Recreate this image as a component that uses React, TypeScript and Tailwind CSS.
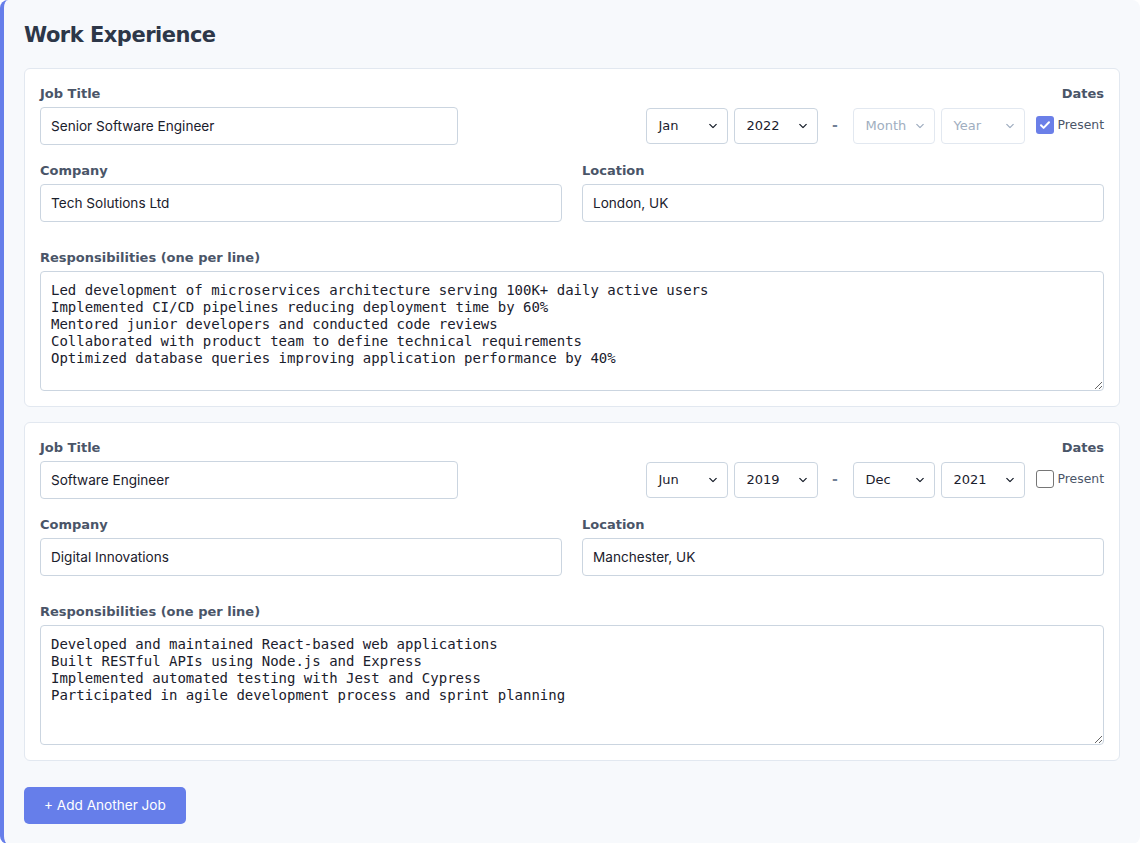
import * as React from "react";

interface Job {
  title: string;
  company: string;
  location: string;
  startMonth: string;
  startYear: string;
  endMonth: string;
  endYear: string;
  present: boolean;
  responsibilities: string[];
}

const jobs: Job[] = [
  {
    title: "Senior Software Engineer",
    company: "Tech Solutions Ltd",
    location: "London, UK",
    startMonth: "Jan",
    startYear: "2022",
    endMonth: "Month",
    endYear: "Year",
    present: true,
    responsibilities: [
      "Led development of microservices architecture serving 100K+ daily active users",
      "Implemented CI/CD pipelines reducing deployment time by 60%",
      "Mentored junior developers and conducted code reviews",
      "Collaborated with product team to define technical requirements",
      "Optimized database queries improving application performance by 40%",
    ],
  },
  {
    title: "Software Engineer",
    company: "Digital Innovations",
    location: "Manchester, UK",
    startMonth: "Jun",
    startYear: "2019",
    endMonth: "Dec",
    endYear: "2021",
    present: false,
    responsibilities: [
      "Developed and maintained React-based web applications",
      "Built RESTful APIs using Node.js and Express",
      "Implemented automated testing with Jest and Cypress",
      "Participated in agile development process and sprint planning",
    ],
  },
];

const labelClasses =
  "mb-[5px] block font-['DejaVu_Sans',sans-serif] text-[13px] font-bold leading-[17px] text-[#4a5568]";

const inputClasses =
  "h-[38px] w-full rounded-[4px] border border-[#cbd5e0] bg-white px-[10px] font-['Inter',sans-serif] text-[13.6px] text-[#1a202c] outline-none";

function Chevron({ muted }: { muted?: boolean }) {
  return (
    <svg
      viewBox="0 0 10 6"
      className="pointer-events-none absolute right-[10px] top-1/2 h-[5px] w-[8px] -translate-y-1/2"
      fill="none"
      stroke={muted ? "#a0aec0" : "#1a202c"}
      strokeWidth="1.6"
      strokeLinecap="round"
      strokeLinejoin="round"
      aria-hidden
    >
      <path d="M1 1l4 4 4-4" />
    </svg>
  );
}

function FakeSelect({
  value,
  width,
  disabled,
}: {
  value: string;
  width: string;
  disabled?: boolean;
}) {
  return (
    <div
      className={`relative flex h-[36px] items-center rounded-[4px] border bg-white pl-[12px] font-['DejaVu_Sans',sans-serif] text-[13px] ${width} ${
        disabled
          ? "border-[#e2e8f0] text-[#a0aec0]"
          : "border-[#cbd5e0] text-[#1a202c]"
      }`}
    >
      {value}
      <Chevron muted={disabled} />
    </div>
  );
}

function Checkbox({ checked }: { checked: boolean }) {
  if (checked) {
    return (
      <span className="flex h-[18px] w-[18px] items-center justify-center rounded-[3px] bg-[#6b7fe8]">
        <svg viewBox="0 0 12 12" className="h-[12px] w-[12px]" fill="none" aria-hidden>
          <path
            d="M2 6.3l2.6 2.6L10 3.2"
            stroke="white"
            strokeWidth="2"
            strokeLinecap="round"
            strokeLinejoin="round"
          />
        </svg>
      </span>
    );
  }
  return (
    <span className="block h-[18px] w-[18px] rounded-[3px] border border-[#767676] bg-white" />
  );
}

function JobCard({ job }: { job: Job }) {
  return (
    <div className="mb-[15px] rounded-md border border-[#e2e8f0] bg-white p-[15px] pt-[16px]">
      <div className="flex items-start justify-between">
        <div className="w-[418px]">
          <label className={labelClasses}>Job Title</label>
          <input className={inputClasses} defaultValue={job.title} readOnly />
        </div>
        <div className="flex flex-col items-end">
          <label className={labelClasses}>Dates</label>
          <div className="flex h-[37px] items-center">
            <div className="flex gap-[6px]">
              <FakeSelect value={job.startMonth} width="w-[82px]" />
              <FakeSelect value={job.startYear} width="w-[84px]" />
            </div>
            <span className="w-[35px] text-center font-['DejaVu_Sans',sans-serif] text-[14px] font-bold text-[#718096]">
              -
            </span>
            <div className="flex gap-[6px]">
              <FakeSelect value={job.endMonth} width="w-[82px]" disabled={job.present} />
              <FakeSelect value={job.endYear} width="w-[84px]" disabled={job.present} />
            </div>
            <label className="ml-[11px] flex items-center gap-[4px] font-['DejaVu_Sans',sans-serif] text-[12.4px] text-[#4a5568]">
              <Checkbox checked={job.present} />
              Present
            </label>
          </div>
        </div>
      </div>

      <div className="mt-[17px] grid grid-cols-2 gap-x-[20px]">
        <div>
          <label className={labelClasses}>Company</label>
          <input className={inputClasses} defaultValue={job.company} readOnly />
        </div>
        <div>
          <label className={labelClasses}>Location</label>
          <input className={inputClasses} defaultValue={job.location} readOnly />
        </div>
      </div>

      <div className="mt-[27px]">
        <label className={labelClasses}>Responsibilities (one per line)</label>
        <textarea
          className="block h-[120px] w-full rounded-[4px] border border-[#cbd5e0] bg-white px-[10px] py-[10px] font-['DejaVu_Sans_Mono',monospace] text-[14px] leading-[17px] text-[#1a202c] outline-none"
          defaultValue={job.responsibilities.join("\n")}
          readOnly
        />
      </div>
    </div>
  );
}

export default function App() {
  return (
    <div className="min-h-[843px] bg-white">
      <div className="min-h-[843px] rounded-lg border-l-4 border-[#667eea] bg-[#f7f9fc] px-[20px] pb-[20px] pt-[21px]">
        <h2 className="mb-[18px] font-['DejaVu_Sans',sans-serif] text-[21px] font-bold leading-[29px] tracking-[-0.5px] text-[#2d3748]">
          Work Experience
        </h2>
        {jobs.map((job) => (
          <JobCard key={job.title} job={job} />
        ))}
        <button className="mt-[11px] h-[37px] rounded-[5px] bg-[#667eea] px-[20px] font-['Inter',sans-serif] text-[13.6px] text-white">
          + Add Another Job
        </button>
      </div>
    </div>
  );
}
